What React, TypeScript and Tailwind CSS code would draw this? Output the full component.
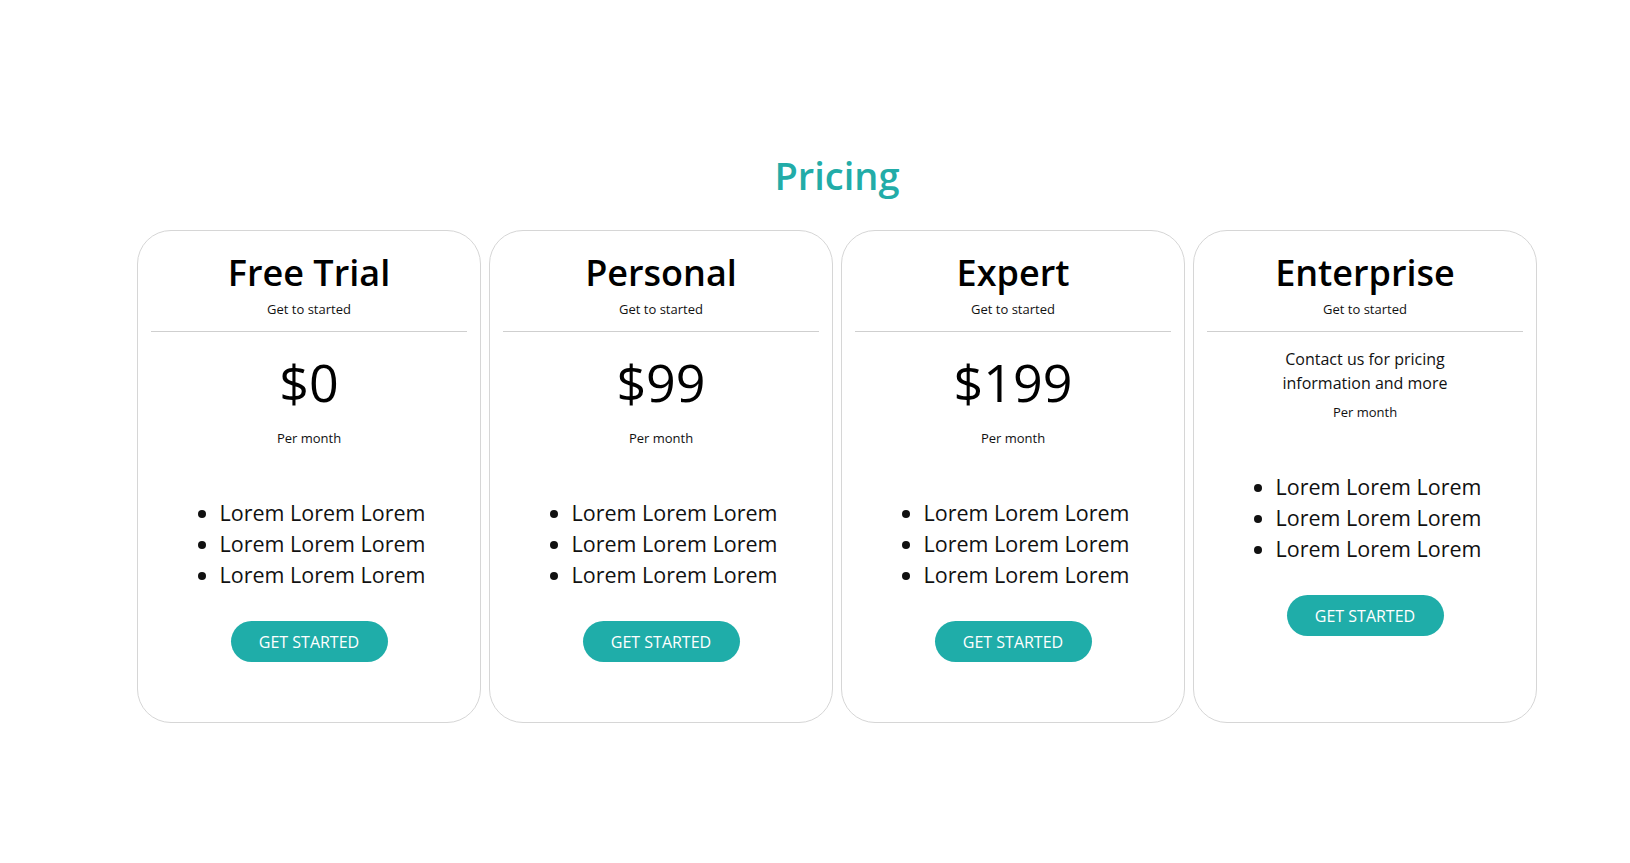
import React from "react"

type Plan = {
  name: string
  price?: string
  note?: string
}

const plans: Plan[] = [
  { name: "Free Trial", price: "$0" },
  { name: "Personal", price: "$99" },
  { name: "Expert", price: "$199" },
  { name: "Enterprise", note: "Contact us for pricing information and more" },
]

function PlanCard({ plan }: { plan: Plan }) {
  return (
    <div className="flex w-[344px] flex-col items-center rounded-[34px] border border-[#d6d6d6] bg-white px-[13px] pt-[20px] pb-[60px] text-center">
      <h2 className="text-[36px] font-semibold leading-[44px] text-black">
        {plan.name}
      </h2>
      <p className="mt-[5px] text-[13px] leading-[18px] text-[#111]">Get to started</p>
      <div className="mt-[13px] h-px w-full bg-[#cfcfcf]"></div>

      {plan.price ? (
        <>
          <p className="mt-[18px] text-[52px] leading-[64px] text-black">{plan.price}</p>
          <p className="mt-[15px] text-[13px] leading-[18px] text-[#111]">Per month</p>
        </>
      ) : (
        <>
          <p className="mt-[15px] w-[180px] text-[16px] leading-[24px] text-[#111]">{plan.note}</p>
          <p className="mt-[8px] text-[13px] leading-[18px] text-[#111]">Per month</p>
        </>
      )}

      <ul className="mt-[50px] list-disc pl-[27px] text-left text-[21.5px] leading-[31px] text-[#111]">
        <li>Lorem Lorem Lorem</li>
        <li>Lorem Lorem Lorem</li>
        <li>Lorem Lorem Lorem</li>
      </ul>

      <button className="mt-[31px] h-[41px] w-[157px] rounded-full bg-[#1fada9] text-[16px] text-white">
        GET STARTED
      </button>
    </div>
  )
}

export default function App() {
  return (
    <div className="min-h-screen bg-white font-['Open_Sans',sans-serif]">
      <section className="flex flex-col items-center pt-[152px] pl-[44px]">
        <h1 className="text-[38px] font-semibold leading-[46px] text-[#22aca8]">Pricing</h1>
        <div className="mt-[32px] flex items-stretch gap-2">
          {plans.map((p) => (
            <PlanCard key={p.name} plan={p} />
          ))}
        </div>
      </section>
    </div>
  )
}
